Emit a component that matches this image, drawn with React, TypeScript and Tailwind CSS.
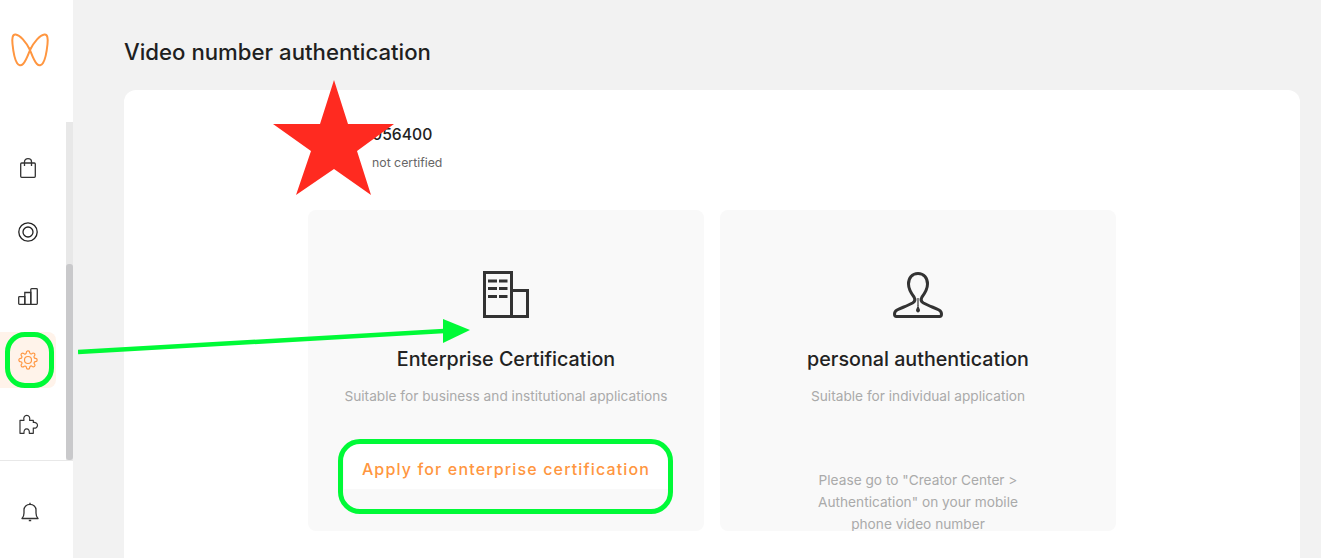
const ink = "#333333";

const Logo = () => (
  <svg width="38" height="34" viewBox="0 0 38 34" fill="none" stroke="#ff9640" strokeWidth="2">
    <path d="M19 17C15 9 9 2 4.500 1.500C1.500 1.200 0.900 5 1.500 11C2.200 18 3.500 26 6 30C7.500 32.500 10 33 12 31C15 28 17 22 19 17C21 22 23 28 26 31C28 33 30.500 32.500 32 30C34.500 26 35.800 18 36.500 11C37.100 5 36.500 1.200 33.500 1.500C29 2 23 9 19 17Z" />
  </svg>
);

const Bag = () => (
  <svg width="16" height="20" viewBox="0 0 16 20" fill="none" stroke={ink} strokeWidth="1.300">
    <rect x="0.700" y="5" width="14.600" height="14.300" rx="1" />
    <path d="M4.500 8V3.800C4.500 1.900 6 0.700 8 0.700C10 0.700 11.500 1.900 11.500 3.800V8" />
  </svg>
);

const Target = () => (
  <svg width="20" height="20" viewBox="0 0 20 20" fill="none" stroke="#222222" strokeWidth="1.300">
    <circle cx="10" cy="10" r="9.200" />
    <circle cx="10" cy="10" r="5" />
  </svg>
);

const Bars = () => (
  <svg width="20" height="17" viewBox="0 0 20 17" fill="none" stroke={ink} strokeWidth="1.300">
    <path d="M0.700 15.500V9.500C0.700 9 1 8.700 1.500 8.700H6.800V16.300H1.500C1 16.300 0.700 16 0.700 15.500Z" />
    <path d="M6.800 16.300V4.500H12.800V16.300" />
    <path d="M12.800 16.300V1.500C12.800 1 13.100 0.700 13.600 0.700H18.500C19 0.700 19.300 1 19.300 1.500V15.500C19.300 16 19 16.300 18.500 16.300H6.800" />
  </svg>
);

const Gear = () => (
  <svg width="20" height="20" viewBox="0 0 24 24" fill="none" stroke="#ff9640" strokeWidth="1.400" strokeLinecap="round" strokeLinejoin="round">
    <circle cx="12" cy="12" r="4.200" />
    <path d="M19.400 15a1.650 1.650 0 0 0 .33 1.820l.06.06a2 2 0 0 1 0 2.830 2 2 0 0 1-2.830 0l-.06-.06a1.650 1.650 0 0 0-1.820-.33 1.650 1.650 0 0 0-1 1.510V21a2 2 0 0 1-2 2 2 2 0 0 1-2-2v-.09A1.650 1.650 0 0 0 9 19.400a1.650 1.650 0 0 0-1.820.33l-.06.06a2 2 0 0 1-2.830 0 2 2 0 0 1 0-2.830l.06-.06a1.650 1.650 0 0 0 .33-1.820 1.650 1.650 0 0 0-1.510-1H3a2 2 0 0 1-2-2 2 2 0 0 1 2-2h.09A1.650 1.650 0 0 0 4.600 9a1.650 1.650 0 0 0-.33-1.820l-.06-.06a2 2 0 0 1 0-2.830 2 2 0 0 1 2.830 0l.06.06a1.650 1.650 0 0 0 1.820.33H9a1.650 1.650 0 0 0 1-1.510V3a2 2 0 0 1 2-2 2 2 0 0 1 2 2v.09a1.650 1.650 0 0 0 1 1.510 1.650 1.650 0 0 0 1.820-.33l.06-.06a2 2 0 0 1 2.830 0 2 2 0 0 1 0 2.830l-.06.06a1.650 1.650 0 0 0-.33 1.820V9a1.650 1.650 0 0 0 1.510 1H21a2 2 0 0 1 2 2 2 2 0 0 1-2 2h-.09a1.650 1.650 0 0 0-1.510 1z" />
  </svg>
);

const Puzzle = () => (
  <svg width="21" height="21" viewBox="0 0 21 21" fill="none" stroke={ink} strokeWidth="1.200" strokeLinejoin="round">
    <path d="M2 6.300H6C5.200 3.500 6.500 1.300 8.800 1.300C11 1.300 12.300 3.500 11.600 6.300H15.300V8.500C17.500 8 19.500 9.200 19.500 11.300C19.500 13.400 17.500 14.600 15.300 14V19.300H11.300C11.600 16.500 10.500 14.800 8.700 14.800C6.900 14.800 5.700 16.500 6 19.300H2Z" />
  </svg>
);

const Bell = () => (
  <svg className="block" width="18" height="20" viewBox="0 0 18 20" fill="none" stroke={ink} strokeWidth="1.300" strokeLinejoin="round">
    <path d="M1 16.500C2.500 15 3 13.500 3 11V8C3 4.800 5.500 2.300 9 2.300C12.500 2.300 15 4.800 15 8V11C15 13.500 15.500 15 17 16.500Z" />
    <path d="M9 2.300V0.800M7.800 18.500H10.200" />
  </svg>
);

const Building = () => (
  <svg className="block shrink-0" width="46" height="48" viewBox="0 0 46 48" fill="none" stroke={ink} strokeWidth="3">
    <path d="M1.500 46.500V2.500H28.500V46.500Z" />
    <path d="M28.500 20.500H44.500V46.500H1.500" />
    <path d="M5 11H14M16 11H24.500M5 18.500H14M16 18.500H24.500M5 26.500H14M16 26.500H24.500" />
  </svg>
);

const Person = () => (
  <svg className="mt-[2px] block shrink-0" width="50" height="46" viewBox="0 0 50 46" fill="none" stroke={ink} strokeWidth="3" strokeLinejoin="round">
    <path d="M25 1.500C19 1.500 15.500 6 15.500 12C15.500 17 18 21 21 25C22.500 27.500 22 29.500 19.500 31C15 33.500 8 36 4 38C2 39.200 1.500 40.500 1.500 42C1.500 43.500 2.200 44.500 3.500 44.500H46.500C47.800 44.500 48.500 43.500 48.500 42C48.500 40.500 48 39.200 46 38C42 36 35 33.500 30.500 31C28 29.500 27.500 27.500 29 25C32 21 34.500 17 34.500 12C34.500 6 31 1.500 25 1.500Z" />
    <path d="M25 33L27 38C27 39.500 26 40.500 25 40.500C24 40.500 23 39.500 23 38Z" fill={ink} stroke="none" />
    <path d="M25 26V34" strokeWidth="1.200" />
  </svg>
);

const navItems = [
  { key: "bag", icon: <Bag /> },
  { key: "target", icon: <Target /> },
  { key: "bars", icon: <Bars /> },
  { key: "gear", icon: <Gear />, active: true },
  { key: "puzzle", icon: <Puzzle /> },
];

const App = () => {
  return (
    <div
      className="relative flex h-[558px] w-[1321px] overflow-hidden bg-[#f2f2f2] text-[#222222]"
      style={{ fontFamily: "Inter, 'Noto Sans', sans-serif" }}
    >
      {/* Sidebar */}
      <aside className="flex h-full w-[73px] shrink-0 flex-col bg-white">
        <div className="flex h-[122px] shrink-0 justify-center pt-[33px] pr-[13px]">
          <div className="h-[34px]">
            <Logo />
          </div>
        </div>
        <div className="flex h-[338px] shrink-0">
          <ul className="w-[66px] pt-[14px]">
            {navItems.map((item) => (
              <li key={item.key} className="flex h-16 items-center">
                <div
                  className={
                    item.active
                      ? "flex h-14 w-14 items-center justify-center rounded-r-lg bg-[#fff3ea]"
                      : "flex h-14 w-14 items-center justify-center"
                  }
                >
                  {item.icon}
                </div>
              </li>
            ))}
          </ul>
          <div className="flex w-[7px] flex-col justify-end bg-[#e8e8e8]">
            <div className="h-[196px] rounded-[3px] bg-[#c9c9cb]" />
          </div>
        </div>
        <div className="flex flex-1 justify-center border-t border-[#e8e8e8] pt-[41px] pr-[13px]">
          <div className="h-5">
            <Bell />
          </div>
        </div>
      </aside>

      {/* Main */}
      <main className="flex-1 pt-[37px] pr-[21px] pl-[51px]">
        <h1 className="text-[22.200px] leading-[30px] font-[450] text-[#1f1f1f]">Video number authentication</h1>
        <section className="mt-[23px] h-[600px] rounded-xl bg-white pt-[33px]">
          <div className="pl-[248px]">
            <div className="text-[15.700px] leading-[24px] font-[450]">056400</div>
            <div className="mt-[6px] text-[12.300px] leading-[20px] text-[#666666]">not certified</div>
          </div>
          <div className="mt-[37px] flex justify-center gap-4">
            <div className="flex h-[321px] w-[396px] flex-col items-center overflow-hidden rounded-lg bg-[#f9f9f9] pt-[60px]">
              <Building />
              <h2 className="mt-[28px] text-[19.700px] leading-[26px] font-[450]">Enterprise Certification</h2>
              <p className="mt-[13px] text-[13.700px] leading-[22px] text-[#aaaaaa]">
                Suitable for business and institutional applications
              </p>
              <button className="mt-[36px] h-[46px] w-[325px] rounded-t-2xl bg-white pt-[6px] text-base font-[450] tracking-[1.150px] text-[#ff9640]">
                Apply for enterprise certification
              </button>
            </div>
            <div className="flex h-[321px] w-[396px] flex-col items-center overflow-hidden rounded-lg bg-[#f9f9f9] pt-[60px]">
              <Person />
              <h2 className="mt-[28px] text-[19.700px] leading-[26px] font-[450]">personal authentication</h2>
              <p className="mt-[13px] text-[13.700px] leading-[22px] text-[#aaaaaa]">Suitable for individual application</p>
              <p className="mt-[62px] w-[230px] text-center text-[13.700px] leading-[22px] text-[#aaaaaa]">
                Please go to "Creator Center &gt; Authentication" on your mobile phone video number
              </p>
            </div>
          </div>
        </section>
      </main>

      {/* Annotations drawn over the screenshot */}
      <svg className="absolute top-[80px] left-[272px]" width="124" height="118" viewBox="0 0 124 118">
        <polygon points="62,0 76,44 122,44 85,71 99,115 62,89 24,115 39,71 1,44 48,44" fill="#ff2a20" />
      </svg>
      <div className="absolute top-[332px] left-[5px] h-[56px] w-[49px] rounded-[20px] border-[5px] border-[#00fa37]" />
      <div className="absolute top-[439px] left-[338px] h-[75px] w-[335px] rounded-[22px] border-[5px] border-[#00fa37]" />
      <svg className="absolute top-[318px] left-[78px]" width="394" height="38" viewBox="0 0 394 38">
        <path d="M0 34L366 13" stroke="#00fa37" strokeWidth="4.500" />
        <polygon points="365,1 392,12 365,25" fill="#00fa37" />
      </svg>
    </div>
  );
};

export default App;
